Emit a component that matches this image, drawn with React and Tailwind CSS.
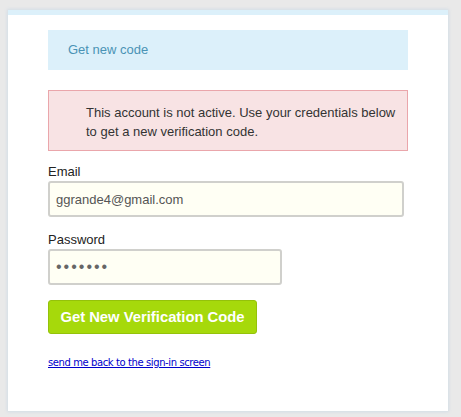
export default function App() {
  return (
    <div className="min-h-[417px] bg-[#e9e9e9] pt-[10px] px-[8px] pb-[6px] font-['Liberation_Sans',Arial,sans-serif]">
      <div className="w-[440px] h-[401px] bg-white border-t-[5px] border-[#dcf0fa] shadow-[0_0_3px_1px_#d3dde6] px-[40px] pt-[15px]">
        <div className="h-[40px] bg-[#dcf0fa] flex items-center pl-[20px] text-[13px] text-[#4a93b5]">
          Get new code
        </div>

        <div className="mt-[20px] h-[61px] bg-[#f8e3e4] border border-[#eaa6ab] pl-[37px] pr-[8px] pt-[12px] text-[13px] leading-[19px] text-[#333]">
          This account is not active. Use your credentials below to get a new verification code.
        </div>

        <form className="flex flex-col">
          <label className="mt-[13px] text-[13px] leading-[16px] text-[#222]">Email</label>
          <input
            type="text"
            defaultValue="ggrande4@gmail.com"
            className="mt-[1px] w-[356px] h-[36px] bg-[#fffff4] border-2 border-[#d0d0cc] rounded-[3px] px-[6px] text-[13px] text-[#555] outline-none"
          />

          <label className="mt-[15px] text-[13px] leading-[16px] text-[#222]">Password</label>
          <input
            type="password"
            defaultValue="1234567"
            className="mt-[1px] w-[234px] h-[36px] bg-[#fffff4] border-2 border-[#d0d0cc] rounded-[3px] px-[6px] text-[16px] tracking-[2px] text-[#666] outline-none"
          />

          <div className="mt-[15px]">
            <button
              type="button"
              className="h-[34px] w-[209px] bg-[#a6d90b] border border-[#94c20a] rounded-[3px] text-white font-bold text-[14.8px]"
            >
              Get New Verification Code
            </button>
          </div>
        </form>

        <a
          href="#"
          className="block mt-[21px] text-[#0000cc] underline font-['DejaVu_Sans',Tahoma,sans-serif] tracking-[-0.4px] text-[10px]"
        >
          send me back to the sign-in screen
        </a>
      </div>
    </div>
  );
}
